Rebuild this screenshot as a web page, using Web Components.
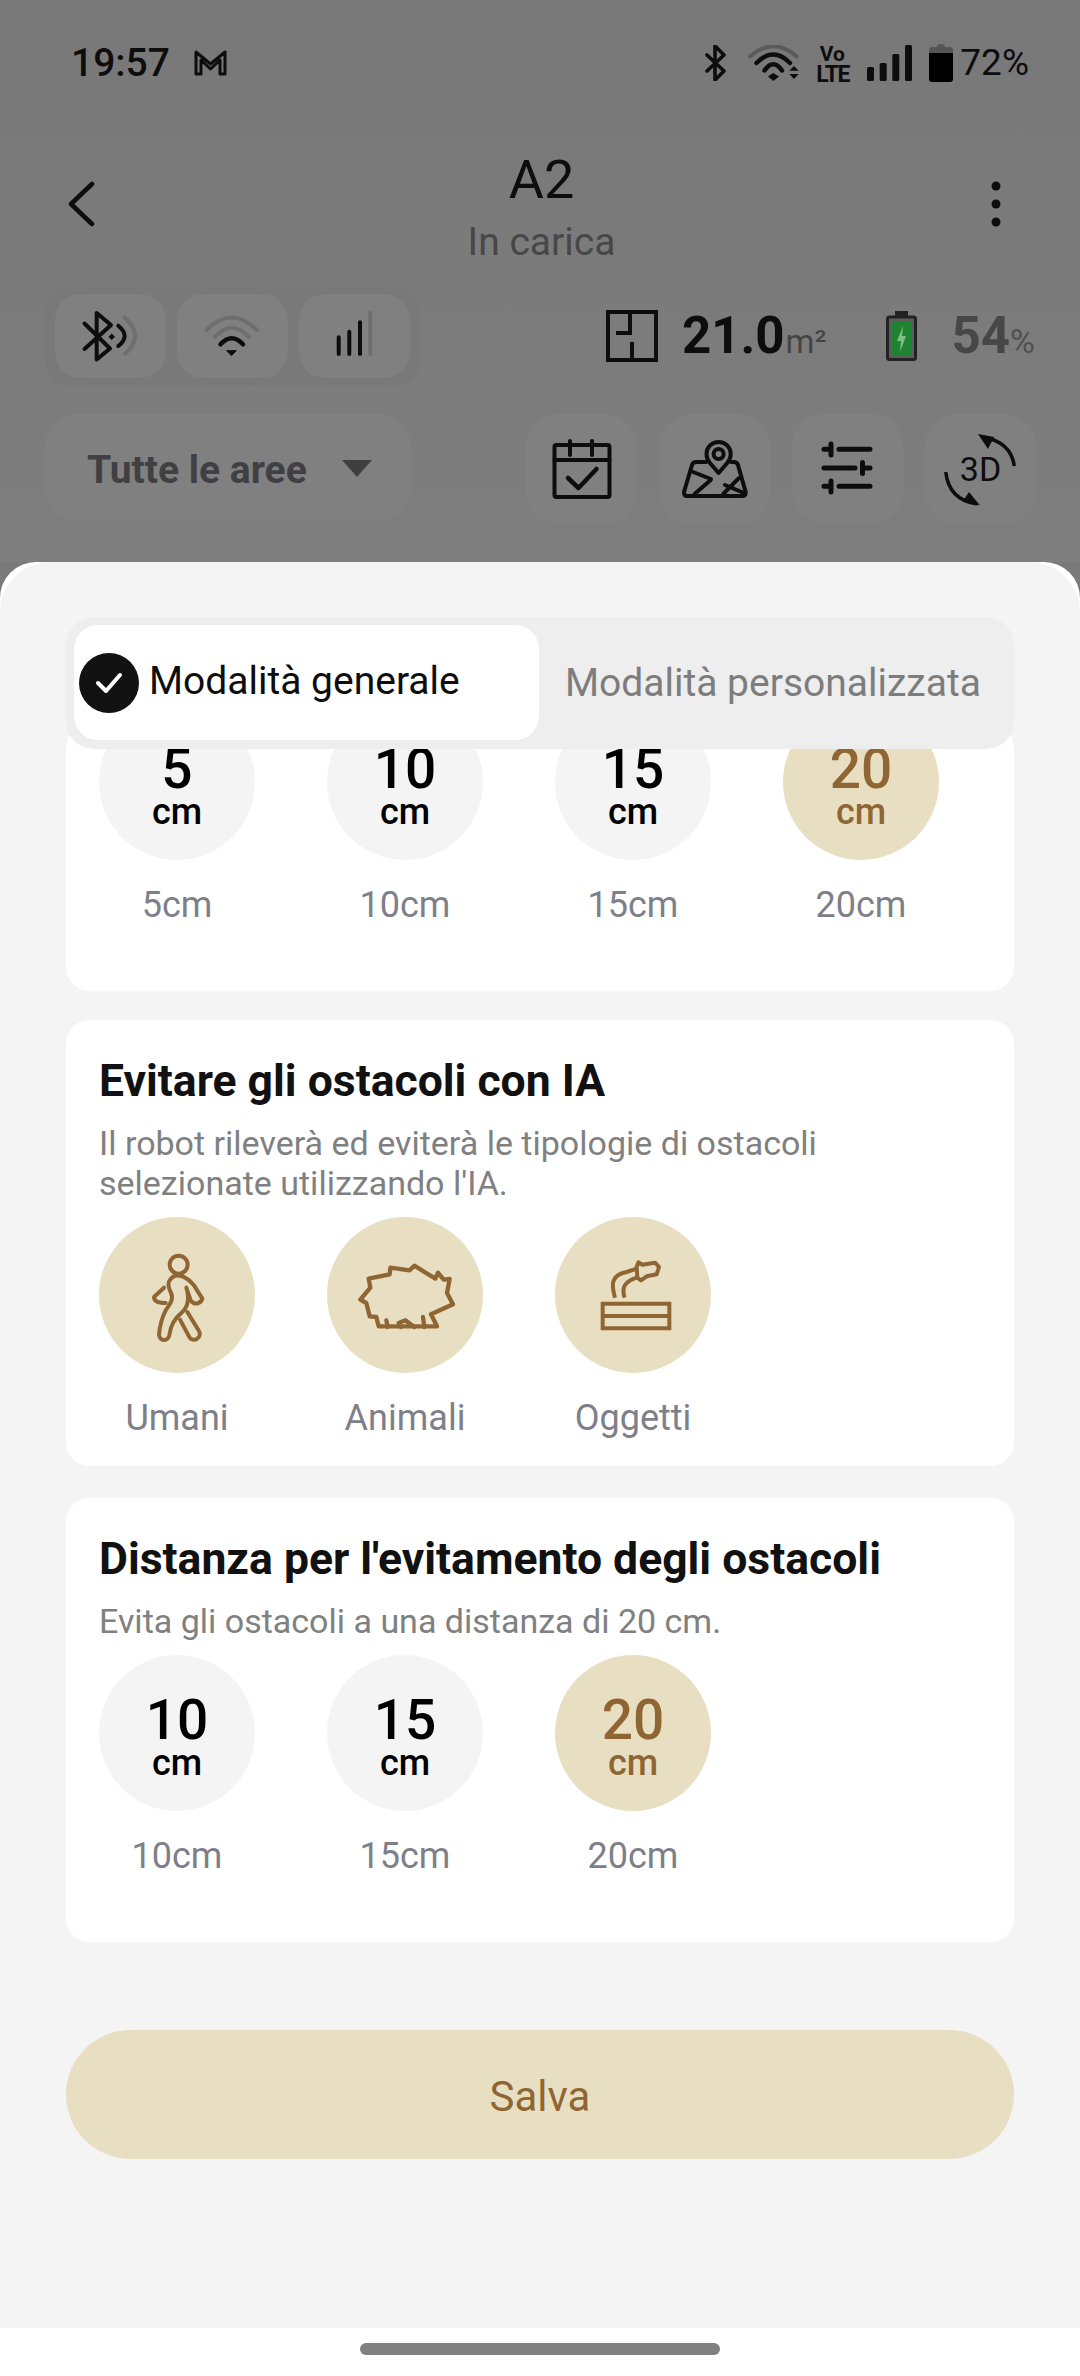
<!DOCTYPE html>
<html lang="it">
<head>
<meta charset="utf-8">
<title>A2</title>
<style>
  html, body { margin: 0; padding: 0; }
  body {
    width: 1080px;
    height: 2376px;
    overflow: hidden;
    display: flex;
    flex-direction: column;
    font-family: Roboto, "Noto Sans", sans-serif;
    background: #7a7a7a;
  }
  .top {
    height: 562px;
    flex: none;
    background: linear-gradient(#787878, #7e7e7e);
  }
</style>
</head>
<body>
  <div class="top">
    <status-bar></status-bar>
    <robot-header name="A2" state="In carica"></robot-header>
    <robot-stats area="21.0" battery="54"></robot-stats>
    <robot-actions area="Tutte le aree"></robot-actions>
  </div>

  <bottom-sheet>
    <mode-switch slot="head" active="Modalità generale" other="Modalità personalizzata"></mode-switch>

    <option-card bare>
      <option-circle value="5" unit="cm" label="5cm"></option-circle>
      <option-circle value="10" unit="cm" label="10cm"></option-circle>
      <option-circle value="15" unit="cm" label="15cm"></option-circle>
      <option-circle value="20" unit="cm" label="20cm" active></option-circle>
    </option-card>

    <option-card style="margin-top:29px" short>
      <span slot="title">Evitare gli ostacoli con IA</span>
      <span slot="sub">Il robot rileverà ed eviterà le tipologie di ostacoli<br>selezionate utilizzando l'IA.</span>
      <option-circle label="Umani" active>
        <svg width="156" height="156" viewBox="0 0 468 468" fill="none" stroke="#8f6633" stroke-width="12" stroke-linejoin="round" stroke-linecap="round">
          <circle cx="239" cy="143" r="27"/>
          <path d="M225 178C205 190 205 205 215 225C225 245 215 258 200 280C190 300 182 330 180 352C180 375 210 375 212 350C215 320 232 300 250 285C268 268 272 245 262 212L275 250C285 265 305 262 310 245L285 205C270 185 245 170 225 178Z"/>
          <path d="M195 212L165 240C165 250 175 258 200 258"/>
          <path d="M243 308L272 362C285 378 310 360 300 342L265 285"/>
        </svg>
      </option-circle>
      <option-circle label="Animali" active>
        <svg width="156" height="156" viewBox="0 0 468 468" fill="none" stroke="#8f6633" stroke-width="13" stroke-linejoin="round" stroke-linecap="round">
          <path d="M125 185L188 172L190 152L248 160L262 146L325 185L333 167L350 188L368 186L360 228L378 262L312 292L330 328H155L148 300L128 298L118 258L100 248L130 212Z"/>
          <path d="M182 330L178 310M222 330L215 318L235 310L262 330M292 330L288 300"/>
        </svg>
      </option-circle>
      <option-circle label="Oggetti" active>
        <svg width="156" height="156" viewBox="0 0 468 468" fill="none" stroke="#8f6633" stroke-width="12" stroke-linejoin="round" stroke-linecap="round">
          <path stroke-linejoin="miter" stroke-linecap="butt" d="M143 260H343V334H143ZM143 297H343"/>
          <path stroke-linecap="butt" d="M180 242C170 205 165 175 215 165L245 155M209 242C200 215 205 195 245 182"/>
          <path d="M245 150L250 136L262 143L300 137L312 150L305 172L275 178L258 190L247 182Z"/>
        </svg>
      </option-circle>
    </option-card>

    <option-card style="margin-top:32px">
      <span slot="title">Distanza per l'evitamento degli ostacoli</span>
      <span slot="sub">Evita gli ostacoli a una distanza di 20 cm.</span>
      <option-circle value="10" unit="cm" label="10cm"></option-circle>
      <option-circle value="15" unit="cm" label="15cm"></option-circle>
      <option-circle value="20" unit="cm" label="20cm" active></option-circle>
    </option-card>

    <save-button slot="foot">Salva</save-button>
  </bottom-sheet>

<script>
// Status bar of the phone, dimmed by the sheet overlay
class StatusBar extends HTMLElement {
  constructor() {
    super()
    this.attachShadow({ mode: 'open' })
    this.shadowRoot.innerHTML = `
      <style>
        :host { display: flex; align-items: center; height: 126px; padding: 0 51px 0 71px; box-sizing: border-box; color: #0d0d0d; }
        .time { font: 500 39px/38px Roboto, sans-serif; width: 123px; }
        .right { margin-left: auto; display: flex; align-items: center; }
        svg { display: block; flex: none; }
        .volte { width: 32px; margin: 0 19px 0 18px; padding-top: 3px; font-family: Roboto, sans-serif; font-weight: 700; text-align: center; }
        .volte div { white-space: nowrap; }
        .vo { font-size: 21px; line-height: 20px; }
        .lte { font-size: 23px; line-height: 22px; letter-spacing: -1.5px; }
        .pct { font: 400 37px/38px Roboto, sans-serif; margin-left: 7px; }
      </style>
      <span class="time">19:57</span>
      <svg width="33" height="26" viewBox="0 0 33 26" fill="none" stroke="#0d0d0d" stroke-width="3" stroke-linejoin="round"><path d="M2 24V2L16.5 14L31 2V24H26V10L16.5 19L7 10V24Z"/></svg>
      <div class="right">
        <svg width="21" height="36" viewBox="0 0 21 36" fill="none" stroke="#0d0d0d" stroke-width="3.6" stroke-linejoin="round" stroke-linecap="round"><path d="M2 10L19 26L10 35V1L19 10L2 26"/></svg>
        <svg width="52" height="36" viewBox="0 0 52 36" fill="none" stroke-linecap="round" style="margin-left:22px;margin-right:-2px">
          <path d="M2 11.5Q25.3 -9 48.6 11.5" stroke="#5a5a5a" stroke-width="4"/>
          <path d="M8.5 18Q25.3 1 42 18" stroke="#0d0d0d" stroke-width="4.5"/>
          <path d="M16.5 25.5Q25.3 13 34 25.5" stroke="#0d0d0d" stroke-width="4.5"/>
          <path d="M20 31.5L25.3 28L31 31.5L25.3 36ZM41.3 25.7L46 21L50.6 25.7ZM41.3 29H50.6L46 34Z" fill="#0d0d0d"/>
        </svg>
        <div class="volte"><div class="vo">Vo</div><div class="lte">LTE</div></div>
        <svg width="45" height="36" viewBox="0 0 45 36" fill="#0d0d0d"><rect x="0" y="22" width="7" height="14" rx="1.5"/><rect x="12.7" y="18" width="7" height="18" rx="1.5"/><rect x="25.3" y="9" width="7" height="27" rx="1.5"/><rect x="38" y="0" width="7" height="36" rx="1.5"/></svg>
        <svg width="24" height="38" viewBox="0 0 24 38" style="margin-left:17px"><path d="M8 3Q8 0 12 0Q16 0 16 3H21Q24 3 24 6V9H0V6Q0 3 3 3Z" fill="#555"/><path d="M0 9H24V35Q24 38 21 38H3Q0 38 0 35Z" fill="#000"/></svg>
        <span class="pct">72%</span>
      </div>
    `
  }
}

// Back arrow, robot name and overflow dots
class RobotHeader extends HTMLElement {
  constructor() {
    super()
    this.attachShadow({ mode: 'open' })
    this.shadowRoot.innerHTML = `
      <style>
        :host { display: flex; height: 160px; padding: 22px 79px 0 67px; box-sizing: border-box; justify-content: space-between; }
        svg { display: block; flex: none; }
        .back { margin-top: 33px; }
        .dots { margin-top: 33px; }
        .mid { text-align: center; font-family: Roboto, sans-serif; margin-left: -3px; }
        .name { font-size: 54px; line-height: 64px; color: #0d0d0d; }
        .state { font-size: 39px; line-height: 60px; color: #474747; }
      </style>
      <svg class="back" width="28" height="46" viewBox="0 0 28 46" fill="none" stroke="#0d0d0d" stroke-width="4.5" stroke-linecap="round" stroke-linejoin="round"><path d="M25 3L4 23L25 43"/></svg>
      <div class="mid">
        <div class="name">${this.getAttribute('name')}</div>
        <div class="state">${this.getAttribute('state')}</div>
      </div>
      <svg class="dots" width="10" height="46" viewBox="0 0 10 46" fill="#0d0d0d"><circle cx="5" cy="5" r="4.5"/><circle cx="5" cy="23" r="4.5"/><circle cx="5" cy="41" r="4.5"/></svg>
    `
  }
}

// Connection group on the left, area and battery on the right
class RobotStats extends HTMLElement {
  constructor() {
    super()
    this.attachShadow({ mode: 'open' })
    this.shadowRoot.innerHTML = `
      <style>
        :host { display: flex; align-items: center; height: 100px; padding: 0 45px; font-family: Roboto, sans-serif; }
        svg { display: block; flex: none; }
        .group { display: flex; gap: 11px; padding: 8px 10px; background: #797979; border-radius: 26px; }
        .btn { width: 111px; height: 84px; background: #808080; border-radius: 26px; }
        .area { margin-left: auto; }
        .num { font-size: 51px; font-weight: 700; line-height: 60px; margin-left: 24px; color: #0d0d0d; }
        .unit { font-size: 33px; line-height: 60px; margin-left: 1px; color: #444; }
        .num.bat { margin-left: 35px; color: #474747; }
        .unit.bat { margin-left: 0; font-size: 34px; color: #505050; }
        .text { display: flex; align-items: baseline; margin-top: 5px; }
      </style>
      <div class="group">
        <div class="btn"><svg width="111" height="84" viewBox="0 0 111 84" fill="none" stroke-linecap="round" stroke-linejoin="round" stroke="#0d0d0d" stroke-width="4">
          <path d="M29.5 29.5L55 54.5L41.7 65.5V19L56 31L29.5 55"/>
          <path d="M56.7 39.5L60 42.7L56.7 46L53.5 42.7Z" fill="#0d0d0d" stroke="none"/>
          <path d="M63.3 31.7Q76 42 63.3 52"/>
          <path d="M70 23.7Q90 42 70 60" stroke="#6e6e6e"/>
        </svg></div>
        <div class="btn"><svg width="111" height="84" viewBox="0 0 111 84" fill="none" stroke-linecap="round" stroke="#6e6e6e" stroke-width="4">
          <path d="M29.4 36Q54.7 11 80 36"/>
          <path d="M37.7 43.3Q54.7 24 72 43.3"/>
          <path d="M43.5 50.3Q54.7 38 66 50.3" stroke="#0d0d0d" stroke-width="4.5"/>
          <path d="M50 56.7H59.3L54.7 61.5Z" fill="#0d0d0d" stroke="#0d0d0d" stroke-width="1"/>
        </svg></div>
        <div class="btn"><svg width="111" height="84" viewBox="0 0 111 84" fill="none" stroke-linecap="round" stroke="#0d0d0d" stroke-width="4">
          <path d="M39.7 43.3V60M50.3 37.7V60M61 28.3V60"/>
          <path d="M71.3 18.7V60" stroke="#6e6e6e"/>
        </svg></div>
      </div>
      <svg class="area" width="52" height="52" viewBox="0 0 52 52" fill="none" stroke="#0d0d0d" stroke-width="4"><rect x="2" y="2" width="48" height="48"/><path d="M24 2V23H10M26 32V50"/></svg>
      <div class="text"><span class="num">${this.getAttribute('area')}</span><span class="unit">m²</span></div>
      <svg width="31" height="50" viewBox="0 0 31 50" style="margin-left:59px"><rect x="9" y="0" width="13" height="6" fill="#222"/><rect x="1.5" y="6" width="28" height="42.5" rx="2" fill="#5c5c5c" stroke="#222" stroke-width="3"/><rect x="5" y="11" width="21" height="34" fill="#1f8432"/><path d="M17 15L11 30H15L14 41L20 25H16Z" fill="#7fbd85"/></svg>
      <div class="text"><span class="num bat">${this.getAttribute('battery')}</span><span class="unit bat">%</span></div>
    `
  }
}

// Area picker and the four round-cornered action buttons
class RobotActions extends HTMLElement {
  constructor() {
    super()
    this.attachShadow({ mode: 'open' })
    this.shadowRoot.innerHTML = `
      <style>
        :host { display: flex; margin-top: 28px; padding: 0 44px 0 45px; align-items: flex-start; font-family: Roboto, sans-serif; }
        svg { display: block; flex: none; }
        .picker { width: 366px; height: 108px; box-sizing: border-box; background: #808080; border-radius: 32px; display: flex; align-items: center; padding-left: 42px; }
        .picker span { font-size: 39px; font-weight: 700; color: #3f3f44; line-height: 44px; margin-top: 3px; width: 255px; white-space: nowrap; }
        .actions { margin-left: auto; display: flex; gap: 22px; }
        .btn { position: relative; width: 111px; height: 110px; background: #808080; border-radius: 32px; }
        .btn span { position: absolute; left: 0; right: 0; top: 37px; text-align: center; font-size: 34px; line-height: 36px; color: #0d0d0d; }
      </style>
      <div class="picker"><span>${this.getAttribute('area')}</span><svg width="30" height="17" viewBox="0 0 30 17" fill="#3f3f3f"><path d="M0 0H30L15 17Z"/></svg></div>
      <div class="actions">
        <div class="btn"><svg width="111" height="110" viewBox="0 0 111 110" fill="none" stroke="#0d0d0d" stroke-width="4" stroke-linecap="round" stroke-linejoin="round">
          <rect x="28.5" y="31" width="55" height="52" rx="2"/><path d="M28.5 46H83.5M44 27V41M66 27V41"/><path d="M42 64L52.5 74L70.5 55" stroke-width="4.5"/>
        </svg></div>
        <div class="btn"><svg width="111" height="110" viewBox="0 0 111 110" fill="none" stroke="#0d0d0d" stroke-width="4" stroke-linecap="round" stroke-linejoin="round">
          <path d="M47 48H37Q34 48 33 51L25 78Q25 82 28 82H84Q87 82 86.7 78L79 51Q78 48 75 48H72"/>
          <path d="M59.6 59L51 49Q47.5 45 47.5 40A12.1 12.1 0 0 1 71.7 40Q71.7 45 68.2 49Z" fill="#808080"/>
          <circle cx="59.6" cy="40" r="5"/>
          <path d="M34 58L52 65M66 71L85 79M35.6 80L51.7 66M64.2 80L79.6 64.3"/>
        </svg></div>
        <div class="btn"><svg width="111" height="110" viewBox="0 0 111 110" fill="none" stroke="#0d0d0d" stroke-width="5" stroke-linecap="round">
          <path d="M32 35.3H37M39 30V41M47 35.3H78"/>
          <path d="M32 54H63M70.5 48.5V59.5M72 54H78"/>
          <path d="M32 72.3H37M39 67V78M47 72.3H78"/>
        </svg></div>
        <div class="btn"><svg width="111" height="110" viewBox="0 0 111 110" fill="none" stroke="#0d0d0d" stroke-width="3.5">
          <path d="M58 23Q86 28 89.3 52"/>
          <path d="M53 20L69 23L63 35Z" fill="#0d0d0d" stroke="none"/>
          <path d="M20.7 58Q24 86 52 90"/>
          <path d="M55 91.5L44 78L38 87Z" fill="#0d0d0d" stroke="none"/>
        </svg><span>3D</span></div>
      </div>
    `
  }
}

// The light sheet rising from the bottom, with its own nav bar strip
class BottomSheet extends HTMLElement {
  constructor() {
    super()
    this.attachShadow({ mode: 'open' })
    this.shadowRoot.innerHTML = `
      <style>
        :host { display: flex; flex-direction: column; flex: 1; background: #fff; border-radius: 36px 36px 0 0; min-height: 0; }
        .inner { flex: 1; background: #f4f4f4; border-radius: 50px 50px 0 0; padding: 55px 66px 0; box-sizing: border-box; min-height: 0; }
        .scroller { margin-top: -24px; overflow: hidden; }
        .nav { height: 48px; flex: none; background: #fff; padding-top: 15px; box-sizing: border-box; }
        .handle { width: 360px; height: 12px; margin: 0 auto; background: #808080; border-radius: 6px; }
        ::slotted([slot="foot"]) { margin-top: 88px; }
      </style>
      <div class="inner">
        <slot name="head"></slot>
        <div class="scroller"><slot></slot></div>
        <slot name="foot"></slot>
      </div>
      <div class="nav"><div class="handle"></div></div>
    `
  }
}

// Two-way mode selector above the scrolling cards
class ModeSwitch extends HTMLElement {
  constructor() {
    super()
    this.attachShadow({ mode: 'open' })
    this.shadowRoot.innerHTML = `
      <style>
        :host { display: flex; position: relative; z-index: 1; height: 132px; box-sizing: border-box; padding: 8px 0 9px 8px; background: #eeeeee; border-radius: 28px; font: 39px/44px Roboto, sans-serif; }
        .on { width: 465px; background: #fff; border-radius: 24px; display: flex; align-items: center; gap: 10px; padding-left: 5px; box-sizing: border-box; color: #0d0d0d; white-space: nowrap; }
        .on span:last-child { margin-top: -3px; }
        .check { width: 60px; height: 60px; flex: none; border-radius: 50%; background: #121212; display: flex; align-items: center; justify-content: center; }
        .off { padding-left: 26px; align-self: center; margin-top: 1px; color: #7d7d7d; white-space: nowrap; }
      </style>
      <div class="on">
        <span class="check"><svg width="30" height="26" viewBox="0 0 30 26" fill="none" stroke="#fff" stroke-width="4" stroke-linecap="round" stroke-linejoin="round"><path d="M4 13L12 21L26 5"/></svg></span>
        <span>${this.getAttribute('active')}</span>
      </div>
      <div class="off">${this.getAttribute('other')}</div>
    `
  }
}

// White settings card: optional heading, then a row of round options
class OptionCard extends HTMLElement {
  constructor() {
    super()
    this.attachShadow({ mode: 'open' })
    const bare = this.hasAttribute('bare')
    const bottom = this.hasAttribute('short') ? 25 : 63
    this.shadowRoot.innerHTML = `
      <style>
        :host { display: block; background: #fff; border-radius: 24px; padding: 0 33px ${bottom}px; overflow: hidden; }
        .title { padding-top: 36px; font: 700 44.5px/50px Roboto, sans-serif; color: #111; white-space: nowrap; }
        .sub { margin-top: 17px; font: 34px/40px Roboto, sans-serif; color: #808080; }
        .row { display: flex; gap: 72px; margin-top: ${bare ? -21 : 14}px; }
      </style>
      ${bare ? '' : `<div class="title"><slot name="title"></slot></div>
      <div class="sub"><slot name="sub"></slot></div>`}
      <div class="row"><slot></slot></div>
    `
  }
}

// One round option with the caption under it
class OptionCircle extends HTMLElement {
  constructor() {
    super()
    this.attachShadow({ mode: 'open' })
    const value = this.getAttribute('value')
    this.shadowRoot.innerHTML = `
      <style>
        :host { display: block; width: 156px; font-family: Roboto, sans-serif; }
        .dot { width: 156px; height: 156px; border-radius: 50%; background: #f4f4f4; color: #000; text-align: center; box-sizing: border-box; }
        :host([active]) .dot { background: #e8dfc2; color: #8f6633; }
        .dot.num { padding-top: 41px; }
        .value { font-size: 55px; font-weight: 500; line-height: 48px; }
        .unit { font-size: 36px; font-weight: 500; line-height: 38px; }
        .label { margin-top: 22px; text-align: center; font-size: 36px; line-height: 46px; color: #7e8089; white-space: nowrap; }
        ::slotted(svg) { display: block; }
      </style>
      ${value
        ? `<div class="dot num"><div class="value">${value}</div><div class="unit">${this.getAttribute('unit')}</div></div>`
        : '<div class="dot"><slot></slot></div>'}
      <div class="label">${this.getAttribute('label')}</div>
    `
  }
}

// Full width pill button
class SaveButton extends HTMLElement {
  constructor() {
    super()
    this.attachShadow({ mode: 'open' })
    this.shadowRoot.innerHTML = `
      <style>
        :host { display: flex; align-items: center; justify-content: center; height: 129px; box-sizing: border-box; padding-top: 4px; border-radius: 65px; background: #e8dfc2; color: #8f6633; font: 42px/46px Roboto, sans-serif; }
      </style>
      <slot></slot>
    `
  }
}

customElements.define('status-bar', StatusBar)
customElements.define('robot-header', RobotHeader)
customElements.define('robot-stats', RobotStats)
customElements.define('robot-actions', RobotActions)
customElements.define('bottom-sheet', BottomSheet)
customElements.define('mode-switch', ModeSwitch)
customElements.define('option-card', OptionCard)
customElements.define('option-circle', OptionCircle)
customElements.define('save-button', SaveButton)
</script>
</body>
</html>
